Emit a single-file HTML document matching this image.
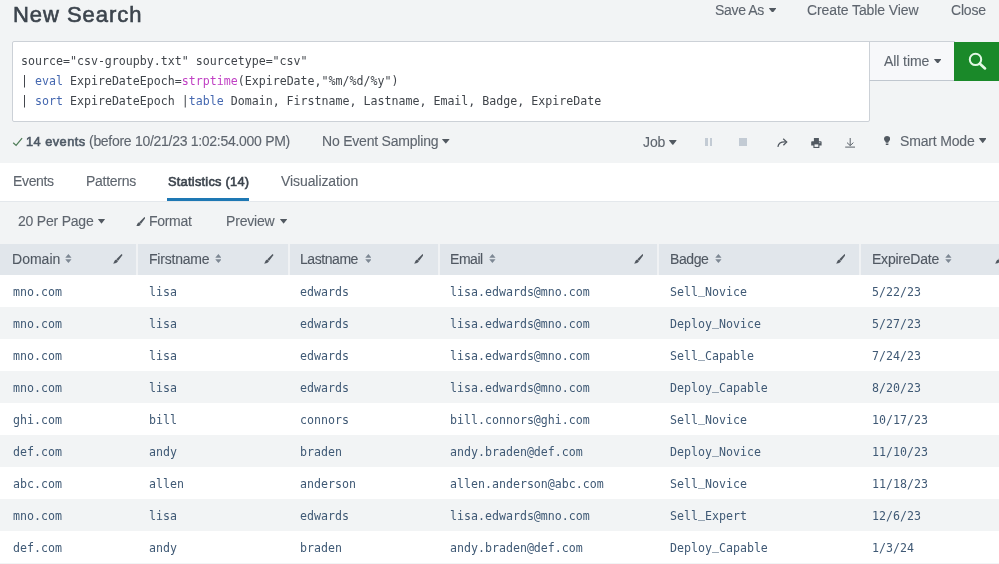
<!DOCTYPE html><html><head><meta charset="utf-8"><title>New Search</title><style>
*{box-sizing:border-box;margin:0;padding:0}
html,body{width:999px;height:564px;overflow:hidden;background:#f2f4f5}
body{position:relative;font-family:"Liberation Sans",sans-serif;color:#5c6773;font-size:14.2px}
.a{position:absolute;white-space:nowrap;line-height:1}
.t,.mono{will-change:transform}
.mono{font-family:"DejaVu Sans Mono","Liberation Mono",monospace;font-size:11.61px}
#sbox{left:12px;top:40.8px;width:858px;height:80.8px;background:#fff;border:1px solid #ccd1d7;border-radius:2px 0 2px 2px}
#tp{left:869px;top:40.8px;width:86px;height:40.3px;background:#f7f8fa;border:1px solid #ccd1d7;border-bottom-color:#c0c7cf}
#go{left:954.2px;top:41.5px;width:45px;height:39.5px;background:#1a8929}
.q{left:21px;color:#40454b}
.kw{color:#4568b0}.fn{color:#c040c4}
.hdr{left:0;top:243.7px;width:999px;height:32px;background:#e1e6eb}
.sep{top:243.7px;width:2.2px;height:32px;background:#f0f2f4}
.row{left:0;width:999px;height:32.5px}
.td{color:#3f5975}
.u{position:relative;top:-2px}
</style></head><body>
<div class="a" id="sbox"></div><div class="a" id="tp"></div><div class="a" id="go"><svg width="45" height="40" viewBox="0 0 45 40"><circle cx="21.5" cy="17.4" r="5.7" fill="none" stroke="#e2f8e4" stroke-width="2"/><path d="M25.9 21.7 L31 26.4" stroke="#e2f8e4" stroke-width="2.7" stroke-linecap="round"/></svg></div>
<div class="a mono q" style="top:56px">source="csv-groupby.txt" sourcetype="csv"</div>
<div class="a mono q" style="top:76px">| <span class="kw">eval</span> ExpireDateEpoch=<span class="fn">strptime</span>(ExpireDate,"%m/%d/%y")</div>
<div class="a mono q" style="top:96px">| <span class="kw">sort</span> ExpireDateEpoch |<span class="kw">table</span> Domain, Firstname, Lastname, Email, Badge, ExpireDate</div>
<div class="a" style="left:0;top:163px;width:999px;height:39px;background:#fff;border-bottom:1px solid #e4e8ec"></div>
<div class="a" style="left:167px;top:198px;width:82px;height:3.2px;background:#1e78b4"></div>
<div class="a hdr"></div>
<div class="a sep" style="left:135.8px"></div>
<div class="a sep" style="left:287.6px"></div>
<div class="a sep" style="left:437.6px"></div>
<div class="a sep" style="left:657.1px"></div>
<div class="a sep" style="left:858.6px"></div>
<div class="a row" style="top:275.40px;background:#fff"></div>
<div class="a mono td" style="left:13px;top:287px">mno.com</div>
<div class="a mono td" style="left:149px;top:287px">lisa</div>
<div class="a mono td" style="left:300px;top:287px">edwards</div>
<div class="a mono td" style="left:450px;top:287px">lisa.edwards@mno.com</div>
<div class="a mono td" style="left:670px;top:287px">Sell<span class="u">_</span>Novice</div>
<div class="a mono td" style="left:872px;top:287px">5/22/23</div>
<div class="a row" style="top:307.35px;background:#f2f4f5"></div>
<div class="a mono td" style="left:13px;top:319px">mno.com</div>
<div class="a mono td" style="left:149px;top:319px">lisa</div>
<div class="a mono td" style="left:300px;top:319px">edwards</div>
<div class="a mono td" style="left:450px;top:319px">lisa.edwards@mno.com</div>
<div class="a mono td" style="left:670px;top:319px">Deploy<span class="u">_</span>Novice</div>
<div class="a mono td" style="left:872px;top:319px">5/27/23</div>
<div class="a row" style="top:339.30px;background:#fff"></div>
<div class="a mono td" style="left:13px;top:351px">mno.com</div>
<div class="a mono td" style="left:149px;top:351px">lisa</div>
<div class="a mono td" style="left:300px;top:351px">edwards</div>
<div class="a mono td" style="left:450px;top:351px">lisa.edwards@mno.com</div>
<div class="a mono td" style="left:670px;top:351px">Sell<span class="u">_</span>Capable</div>
<div class="a mono td" style="left:872px;top:351px">7/24/23</div>
<div class="a row" style="top:371.25px;background:#f2f4f5"></div>
<div class="a mono td" style="left:13px;top:383px">mno.com</div>
<div class="a mono td" style="left:149px;top:383px">lisa</div>
<div class="a mono td" style="left:300px;top:383px">edwards</div>
<div class="a mono td" style="left:450px;top:383px">lisa.edwards@mno.com</div>
<div class="a mono td" style="left:670px;top:383px">Deploy<span class="u">_</span>Capable</div>
<div class="a mono td" style="left:872px;top:383px">8/20/23</div>
<div class="a row" style="top:403.20px;background:#fff"></div>
<div class="a mono td" style="left:13px;top:415px">ghi.com</div>
<div class="a mono td" style="left:149px;top:415px">bill</div>
<div class="a mono td" style="left:300px;top:415px">connors</div>
<div class="a mono td" style="left:450px;top:415px">bill.connors@ghi.com</div>
<div class="a mono td" style="left:670px;top:415px">Sell<span class="u">_</span>Novice</div>
<div class="a mono td" style="left:872px;top:415px">10/17/23</div>
<div class="a row" style="top:435.15px;background:#f2f4f5"></div>
<div class="a mono td" style="left:13px;top:447px">def.com</div>
<div class="a mono td" style="left:149px;top:447px">andy</div>
<div class="a mono td" style="left:300px;top:447px">braden</div>
<div class="a mono td" style="left:450px;top:447px">andy.braden@def.com</div>
<div class="a mono td" style="left:670px;top:447px">Deploy<span class="u">_</span>Novice</div>
<div class="a mono td" style="left:872px;top:447px">11/10/23</div>
<div class="a row" style="top:467.10px;background:#fff"></div>
<div class="a mono td" style="left:13px;top:479px">abc.com</div>
<div class="a mono td" style="left:149px;top:479px">allen</div>
<div class="a mono td" style="left:300px;top:479px">anderson</div>
<div class="a mono td" style="left:450px;top:479px">allen.anderson@abc.com</div>
<div class="a mono td" style="left:670px;top:479px">Sell<span class="u">_</span>Novice</div>
<div class="a mono td" style="left:872px;top:479px">11/18/23</div>
<div class="a row" style="top:499.05px;background:#f2f4f5"></div>
<div class="a mono td" style="left:13px;top:511px">mno.com</div>
<div class="a mono td" style="left:149px;top:511px">lisa</div>
<div class="a mono td" style="left:300px;top:511px">edwards</div>
<div class="a mono td" style="left:450px;top:511px">lisa.edwards@mno.com</div>
<div class="a mono td" style="left:670px;top:511px">Sell<span class="u">_</span>Expert</div>
<div class="a mono td" style="left:872px;top:511px">12/6/23</div>
<div class="a row" style="top:531.00px;background:#fff"></div>
<div class="a mono td" style="left:13px;top:543px">def.com</div>
<div class="a mono td" style="left:149px;top:543px">andy</div>
<div class="a mono td" style="left:300px;top:543px">braden</div>
<div class="a mono td" style="left:450px;top:543px">andy.braden@def.com</div>
<div class="a mono td" style="left:670px;top:543px">Deploy<span class="u">_</span>Capable</div>
<div class="a mono td" style="left:872px;top:543px">1/3/24</div>
<div class="a row" style="top:562.95px;background:#f2f4f5"></div>
<div class="a t" id="t0" style="left:13px;top:4px;font-size:22.0px;font-weight:normal;-webkit-text-stroke:0.6px #3c444d;color:#3c444d;letter-spacing:0.956px">New Search</div>
<div class="a t" id="t1" style="left:715px;top:3px;font-size:14.0px;font-weight:normal;-webkit-text-stroke:0.12px #5e656e;color:#5e656e;letter-spacing:-0.333px">Save As</div>
<div class="a t" id="t2" style="left:807px;top:3px;font-size:14.0px;font-weight:normal;-webkit-text-stroke:0.12px #5e656e;color:#5e656e;letter-spacing:-0.094px">Create Table View</div>
<div class="a t" id="t3" style="left:951px;top:3px;font-size:14.0px;font-weight:normal;-webkit-text-stroke:0.12px #5e656e;color:#5e656e;letter-spacing:-0.200px">Close</div>
<div class="a t" id="t4" style="left:884px;top:54px;font-size:14.0px;font-weight:normal;-webkit-text-stroke:0.12px #5e656e;color:#5e656e;letter-spacing:-0.086px">All time</div>
<div class="a t" id="t5" style="left:26px;top:136px;font-size:12.8px;font-weight:normal;-webkit-text-stroke:0.6px #4f5a66;color:#4f5a66;letter-spacing:0.462px">14 events</div>
<div class="a t" id="t6" style="left:89px;top:134px;font-size:14.0px;font-weight:normal;-webkit-text-stroke:0.12px #5e656e;color:#5e656e;letter-spacing:-0.287px">(before 10/21/23 1:02:54.000 PM)</div>
<div class="a t" id="t7" style="left:322px;top:134px;font-size:14.0px;font-weight:normal;-webkit-text-stroke:0.12px #5e656e;color:#5e656e;letter-spacing:-0.206px">No Event Sampling</div>
<div class="a t" id="t8" style="left:643px;top:135px;font-size:14.0px;font-weight:normal;-webkit-text-stroke:0.12px #5e656e;color:#5e656e;letter-spacing:-0.100px">Job</div>
<div class="a t" id="t9" style="left:900px;top:134px;font-size:14.0px;font-weight:normal;-webkit-text-stroke:0.12px #5e656e;color:#5e656e;letter-spacing:-0.167px">Smart Mode</div>
<div class="a t" id="t10" style="left:13px;top:174px;font-size:14.0px;font-weight:normal;-webkit-text-stroke:0.12px #5e656e;color:#5e656e;letter-spacing:-0.340px">Events</div>
<div class="a t" id="t11" style="left:86px;top:174px;font-size:14.0px;font-weight:normal;-webkit-text-stroke:0.12px #5e656e;color:#5e656e;letter-spacing:-0.286px">Patterns</div>
<div class="a t" id="t12" style="left:168px;top:176px;font-size:12.8px;font-weight:normal;-webkit-text-stroke:0.6px #3c444d;color:#3c444d;letter-spacing:0.257px">Statistics (14)</div>
<div class="a t" id="t13" style="left:281px;top:174px;font-size:14.0px;font-weight:normal;-webkit-text-stroke:0.12px #5e656e;color:#5e656e;letter-spacing:-0.083px">Visualization</div>
<div class="a t" id="t14" style="left:18px;top:214px;font-size:14.0px;font-weight:normal;-webkit-text-stroke:0.12px #5e656e;color:#5e656e;letter-spacing:-0.210px">20 Per Page</div>
<div class="a t" id="t15" style="left:149px;top:214px;font-size:14.0px;font-weight:normal;-webkit-text-stroke:0.12px #5e656e;color:#5e656e;letter-spacing:-0.300px">Format</div>
<div class="a t" id="t16" style="left:226px;top:214px;font-size:14.0px;font-weight:normal;-webkit-text-stroke:0.12px #5e656e;color:#5e656e;letter-spacing:-0.183px">Preview</div>
<div class="a t" id="t17" style="left:12px;top:252px;font-size:14.0px;font-weight:normal;-webkit-text-stroke:0.12px #505862;color:#505862;letter-spacing:0.020px">Domain</div>
<div class="a t" id="t18" style="left:149px;top:252px;font-size:14.0px;font-weight:normal;-webkit-text-stroke:0.12px #505862;color:#505862;letter-spacing:-0.213px">Firstname</div>
<div class="a t" id="t19" style="left:300px;top:252px;font-size:14.0px;font-weight:normal;-webkit-text-stroke:0.12px #505862;color:#505862;letter-spacing:-0.443px">Lastname</div>
<div class="a t" id="t20" style="left:450px;top:252px;font-size:14.0px;font-weight:normal;-webkit-text-stroke:0.12px #505862;color:#505862;letter-spacing:-0.450px">Email</div>
<div class="a t" id="t21" style="left:670px;top:252px;font-size:14.0px;font-weight:normal;-webkit-text-stroke:0.12px #505862;color:#505862;letter-spacing:-0.425px">Badge</div>
<div class="a t" id="t22" style="left:872px;top:252px;font-size:14.0px;font-weight:normal;-webkit-text-stroke:0.12px #505862;color:#505862;letter-spacing:-0.222px">ExpireDate</div>
<svg class="a" style="left:12px;top:136px" width="12" height="11" viewBox="0 0 12 11"><path d="M1.2 6.7 L4.1 9.4 L10.1 2.1" fill="none" stroke="#4f7d58" stroke-width="1.25"/></svg>
<svg class="a" style="left:769.0px;top:7.6px" width="7.2" height="4.7" viewBox="0 0 10 6" preserveAspectRatio="none"><path d="M0.6 0H9.4Q10.3 0.1 9.7 0.8L5.5 5.7Q5 6.2 4.5 5.7L0.3 0.8Q-0.3 0.1 0.6 0Z" fill="#525961"/></svg>
<svg class="a" style="left:933.5px;top:58.6px" width="7.4" height="4.5" viewBox="0 0 10 6" preserveAspectRatio="none"><path d="M0.6 0H9.4Q10.3 0.1 9.7 0.8L5.5 5.7Q5 6.2 4.5 5.7L0.3 0.8Q-0.3 0.1 0.6 0Z" fill="#525961"/></svg>
<svg class="a" style="left:442.1px;top:139.2px" width="7.6" height="4.6" viewBox="0 0 10 6" preserveAspectRatio="none"><path d="M0.6 0H9.4Q10.3 0.1 9.7 0.8L5.5 5.7Q5 6.2 4.5 5.7L0.3 0.8Q-0.3 0.1 0.6 0Z" fill="#525961"/></svg>
<svg class="a" style="left:669.0px;top:139.9px" width="7.6" height="4.9" viewBox="0 0 10 6" preserveAspectRatio="none"><path d="M0.6 0H9.4Q10.3 0.1 9.7 0.8L5.5 5.7Q5 6.2 4.5 5.7L0.3 0.8Q-0.3 0.1 0.6 0Z" fill="#525961"/></svg>
<svg class="a" style="left:978.7px;top:138.3px" width="7.5" height="5.0" viewBox="0 0 10 6" preserveAspectRatio="none"><path d="M0.6 0H9.4Q10.3 0.1 9.7 0.8L5.5 5.7Q5 6.2 4.5 5.7L0.3 0.8Q-0.3 0.1 0.6 0Z" fill="#525961"/></svg>
<svg class="a" style="left:97.7px;top:219.1px" width="7.0" height="4.6" viewBox="0 0 10 6" preserveAspectRatio="none"><path d="M0.6 0H9.4Q10.3 0.1 9.7 0.8L5.5 5.7Q5 6.2 4.5 5.7L0.3 0.8Q-0.3 0.1 0.6 0Z" fill="#525961"/></svg>
<svg class="a" style="left:280.0px;top:219.1px" width="7.2" height="4.6" viewBox="0 0 10 6" preserveAspectRatio="none"><path d="M0.6 0H9.4Q10.3 0.1 9.7 0.8L5.5 5.7Q5 6.2 4.5 5.7L0.3 0.8Q-0.3 0.1 0.6 0Z" fill="#525961"/></svg>
<svg class="a" style="left:65.2px;top:254.3px" width="6.8" height="9" viewBox="0 0 7 10"><path d="M0 4.3 L3.5 0 L7 4.3Z M0 5.9 L3.5 10 L7 5.9Z" fill="#7d8894"/></svg>
<svg class="a" style="left:214.5px;top:254.3px" width="6.8" height="9" viewBox="0 0 7 10"><path d="M0 4.3 L3.5 0 L7 4.3Z M0 5.9 L3.5 10 L7 5.9Z" fill="#7d8894"/></svg>
<svg class="a" style="left:364.7px;top:254.3px" width="6.8" height="9" viewBox="0 0 7 10"><path d="M0 4.3 L3.5 0 L7 4.3Z M0 5.9 L3.5 10 L7 5.9Z" fill="#7d8894"/></svg>
<svg class="a" style="left:488.8px;top:254.3px" width="6.8" height="9" viewBox="0 0 7 10"><path d="M0 4.3 L3.5 0 L7 4.3Z M0 5.9 L3.5 10 L7 5.9Z" fill="#7d8894"/></svg>
<svg class="a" style="left:715.3px;top:254.3px" width="6.8" height="9" viewBox="0 0 7 10"><path d="M0 4.3 L3.5 0 L7 4.3Z M0 5.9 L3.5 10 L7 5.9Z" fill="#7d8894"/></svg>
<svg class="a" style="left:945.2px;top:254.3px" width="6.8" height="9" viewBox="0 0 7 10"><path d="M0 4.3 L3.5 0 L7 4.3Z M0 5.9 L3.5 10 L7 5.9Z" fill="#7d8894"/></svg>
<svg class="a" style="left:113.2px;top:254.4px" width="9.6" height="9.5" viewBox="0 0 10 10"><path d="M9 0 L10 1 L5.4 7.1 L3.5 5.5 Z M3.2 5.7 L5.2 7.4 C4.6 9.4 2.4 10.2 0 9.9 C1.5 8.8 1.1 6.3 3.2 5.7Z" fill="#525961"/></svg>
<svg class="a" style="left:264.2px;top:254.4px" width="9.6" height="9.5" viewBox="0 0 10 10"><path d="M9 0 L10 1 L5.4 7.1 L3.5 5.5 Z M3.2 5.7 L5.2 7.4 C4.6 9.4 2.4 10.2 0 9.9 C1.5 8.8 1.1 6.3 3.2 5.7Z" fill="#525961"/></svg>
<svg class="a" style="left:413.9px;top:254.4px" width="9.6" height="9.5" viewBox="0 0 10 10"><path d="M9 0 L10 1 L5.4 7.1 L3.5 5.5 Z M3.2 5.7 L5.2 7.4 C4.6 9.4 2.4 10.2 0 9.9 C1.5 8.8 1.1 6.3 3.2 5.7Z" fill="#525961"/></svg>
<svg class="a" style="left:633.6px;top:254.4px" width="9.6" height="9.5" viewBox="0 0 10 10"><path d="M9 0 L10 1 L5.4 7.1 L3.5 5.5 Z M3.2 5.7 L5.2 7.4 C4.6 9.4 2.4 10.2 0 9.9 C1.5 8.8 1.1 6.3 3.2 5.7Z" fill="#525961"/></svg>
<svg class="a" style="left:835.8px;top:254.4px" width="9.6" height="9.5" viewBox="0 0 10 10"><path d="M9 0 L10 1 L5.4 7.1 L3.5 5.5 Z M3.2 5.7 L5.2 7.4 C4.6 9.4 2.4 10.2 0 9.9 C1.5 8.8 1.1 6.3 3.2 5.7Z" fill="#525961"/></svg>
<svg class="a" style="left:995.3px;top:254.4px" width="9.6" height="9.5" viewBox="0 0 10 10"><path d="M9 0 L10 1 L5.4 7.1 L3.5 5.5 Z M3.2 5.7 L5.2 7.4 C4.6 9.4 2.4 10.2 0 9.9 C1.5 8.8 1.1 6.3 3.2 5.7Z" fill="#525961"/></svg>
<svg class="a" style="left:135.8px;top:216.7px" width="9.4" height="9.4" viewBox="0 0 10 10"><path d="M9 0 L10 1 L5.4 7.1 L3.5 5.5 Z M3.2 5.7 L5.2 7.4 C4.6 9.4 2.4 10.2 0 9.9 C1.5 8.8 1.1 6.3 3.2 5.7Z" fill="#525961"/></svg>
<div class="a" style="left:705.2px;top:137.8px;width:2.4px;height:8.6px;background:#c3cbd4"></div><div class="a" style="left:710px;top:137.8px;width:2.4px;height:8.6px;background:#c3cbd4"></div>
<div class="a" style="left:738.6px;top:137.8px;width:8.8px;height:8.6px;background:#c3cbd4"></div>
<svg class="a" style="left:776.5px;top:138px" width="11" height="10" viewBox="0 0 11 10"><path d="M0.9 8.8 C1.4 5.6 4.2 3.6 9.2 4" fill="none" stroke="#525961" stroke-width="1.25"/><path d="M6.2 0.8 L9.7 4 L6.4 7.2" fill="none" stroke="#525961" stroke-width="1.25"/></svg>
<svg class="a" style="left:810.8px;top:137.8px" width="11" height="10.2" viewBox="0 0 11 10.2"><path d="M2.9 0H7.9V3.3H9.8Q10.6 3.3 10.6 4.1V7.6H8.4V10H2.4V7.6H0.2V4.1Q0.2 3.3 1 3.3H2.9Z" fill="#525961"/><rect x="3.5" y="6.4" width="3.8" height="2.5" fill="#f2f4f5"/><rect x="7.9" y="4.3" width="1.5" height="0.9" fill="#c3cbd4"/></svg>
<svg class="a" style="left:844.6px;top:138px" width="10.4" height="10" viewBox="0 0 10.4 10"><path d="M5.2 0V7.4 M2 4.6 L5.2 7.6 L8.4 4.6 M0.2 9.1H10.2" fill="none" stroke="#525961" stroke-width="0.95"/></svg>
<svg class="a" style="left:883.9px;top:136px" width="6.2" height="9.2" viewBox="0 0 6.2 9.2"><path d="M3.1 0 C5 0 6.2 1.3 6.2 2.9 C6.2 4.6 4.6 5.2 4.3 6.8 H1.9 C1.6 5.2 0 4.6 0 2.9 C0 1.3 1.2 0 3.1 0Z M1.8 7.6H4.4V9.2H1.8Z" fill="#525961"/></svg>
</body></html>
